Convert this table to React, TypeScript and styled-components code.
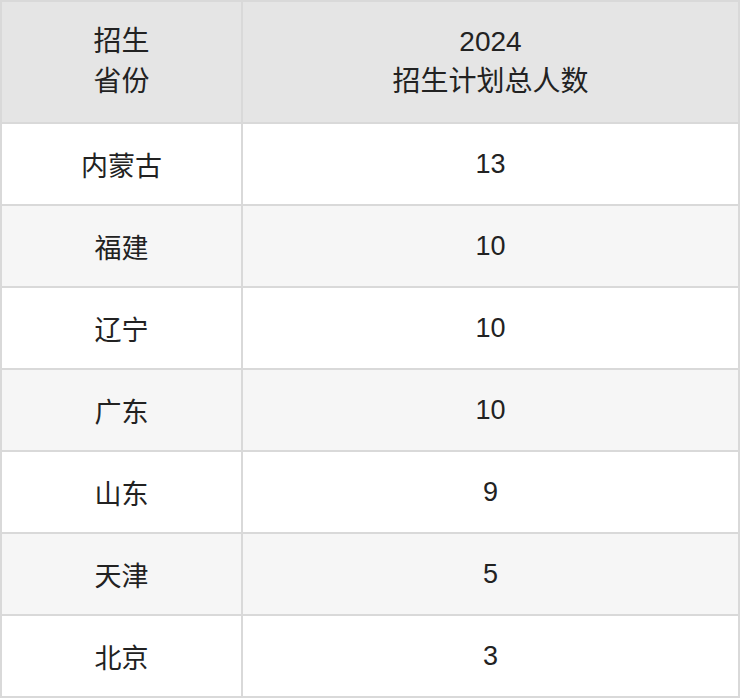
import React from "react";
import styled, { createGlobalStyle } from "styled-components";

const GlobalStyle = createGlobalStyle`
	html, body {
		margin: 0;
		padding: 0;
		background: #ffffff;
	}
`;

const Table = styled.div`
	width: 740px;
	box-sizing: border-box;
	display: grid;
	grid-template-columns: 239px 495px;
	grid-template-rows: 120px repeat(7, 80px);
	gap: 2px;
	padding: 2px;
	background: #d9d9d9;
	font-family: "Liberation Sans", "Noto Sans CJK SC", sans-serif;
	color: #222222;
`;

const HeadCell = styled.div`
	background: #e5e5e5;
	display: flex;
	align-items: center;
	justify-content: center;
	text-align: center;
	font-size: 28px;
	line-height: 40px;
`;

const Cell = styled.div<{ $striped: boolean }>`
	background: ${(p) => (p.$striped ? "#f6f6f6" : "#ffffff")};
	display: flex;
	align-items: center;
	justify-content: center;
	font-size: 27px;
`;

const rows: [string, number][] = [
	["内蒙古", 13],
	["福建", 10],
	["辽宁", 10],
	["广东", 10],
	["山东", 9],
	["天津", 5],
	["北京", 3],
];

const App: React.FunctionComponent = () => {
	return (
		<>
			<GlobalStyle />
			<Table>
				<HeadCell>
					招生
					<br />
					省份
				</HeadCell>
				<HeadCell>
					2024
					<br />
					招生计划总人数
				</HeadCell>
				{rows.map(([province, count], i) => (
					<React.Fragment key={province}>
						<Cell $striped={i % 2 === 1}>{province}</Cell>
						<Cell $striped={i % 2 === 1}>{count}</Cell>
					</React.Fragment>
				))}
			</Table>
		</>
	);
};

export default App;
